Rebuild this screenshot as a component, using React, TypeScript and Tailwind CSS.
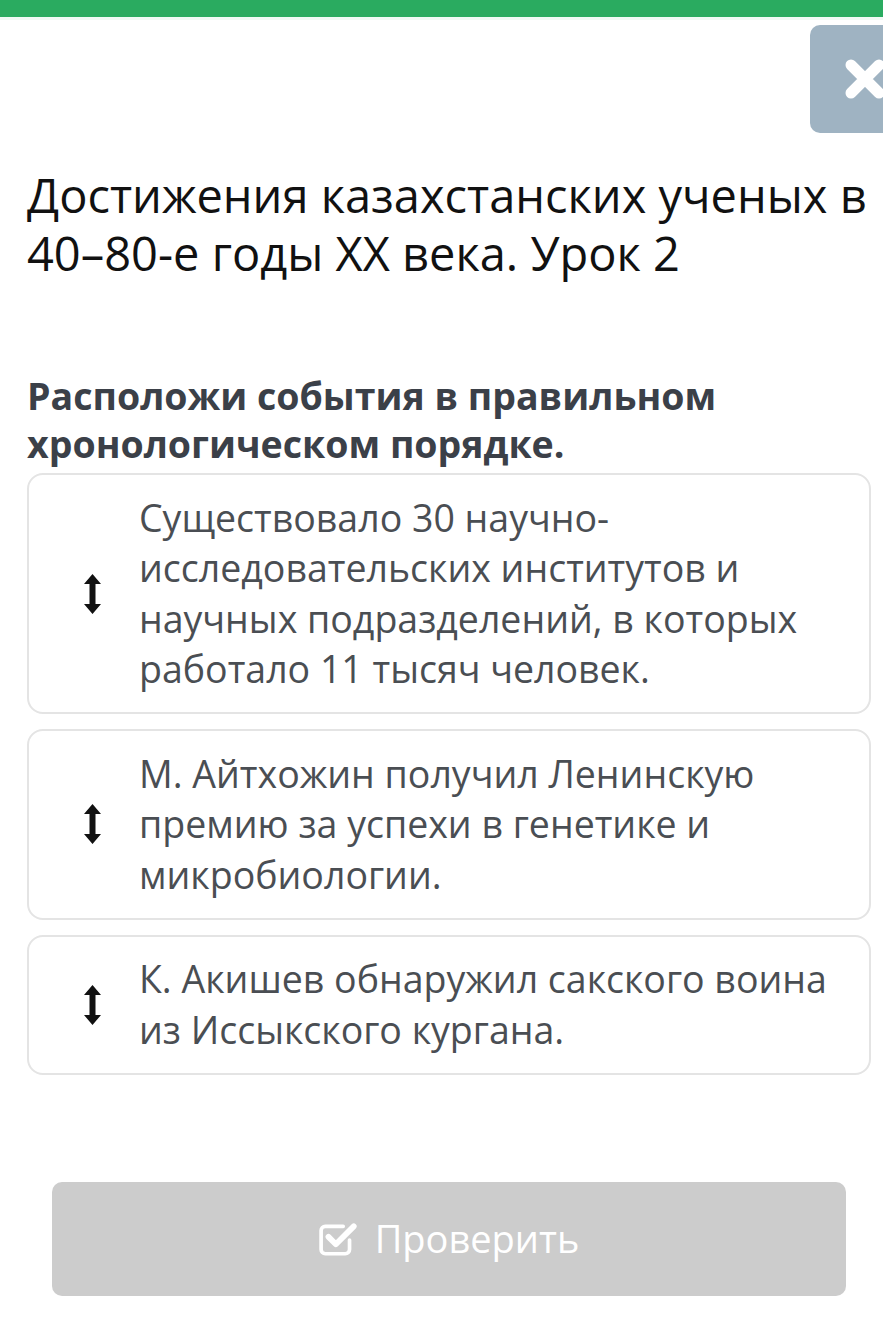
import React from 'react';

const items = [
  'Существовало 30 научно-исследовательских институтов и научных подразделений, в которых работало 11 тысяч человек.',
  'М. Айтхожин получил Ленинскую премию за успехи в генетике и микробиологии.',
  'К. Акишев обнаружил сакского воина из Иссыкского кургана.',
];

function UpDownArrow() {
  return (
    <svg width="17" height="40" viewBox="0 0 17 40" fill="#111">
      <path d="M8.5 0 L17 10 L11.5 10 L11.5 30 L17 30 L8.5 40 L0 30 L5.5 30 L5.5 10 L0 10 Z" />
    </svg>
  );
}

function CheckSquare() {
  return (
    <svg width="40" height="38" viewBox="0 0 38 36" fill="none" stroke="#fff" strokeLinecap="round" strokeLinejoin="round">
      <path d="M29 19 V28 a4 4 0 0 1 -4 4 H6 a4 4 0 0 1 -4 -4 V10 a4 4 0 0 1 4 -4 H23" strokeWidth="3.5" />
      <path d="M9 16 L16 23 L33 6" strokeWidth="5.5" />
    </svg>
  );
}

export default function App() {
  return (
    <div className="min-h-screen w-full overflow-hidden bg-white" style={{ fontFamily: '"Open Sans", "Noto Sans", sans-serif' }}>
      <div className="h-[17px] bg-[#2aab60]" />
      <div className="h-[3px] bg-[#effaf5]" />

      <div className="pl-[27px] pr-[12px]">
        <div className="flex justify-end pt-[5px]">
          <button className="mr-[-49px] flex h-[108px] w-[110px] items-center justify-center rounded-[10px] bg-[#9fb3c2]">
            <svg width="44" height="44" viewBox="0 0 44 44" stroke="#fff" strokeWidth="11" strokeLinecap="round">
              <path d="M8 8 L36 36 M36 8 L8 36" />
            </svg>
          </button>
        </div>

        <h1 className="mt-[34px] mr-[-8px] text-[47px] leading-[57.6px] font-normal text-[#111]">
          Достижения казахстанских ученых в 40–80-е годы XX века. Урок 2
        </h1>

        <p className="mt-[90px] text-[37.5px] leading-[48px] font-bold text-[#3b4048]">
          Расположи события в правильном хронологическом порядке.
        </p>

        <div className="mt-[5px] flex flex-col gap-[15px]">
          {items.map((t, i) => (
            <div key={i} className="flex items-center rounded-[16px] border-2 border-[#e4e4e4] py-[17.5px] pr-[20px]">
              <div className="flex w-[110px] shrink-0 justify-start pl-[55px]">
                <UpDownArrow />
              </div>
              <div className="text-[37.5px] leading-[50.5px] text-[#4a4e53]">{t}</div>
            </div>
          ))}
        </div>

        <div className="mx-[25px] mt-[107px] flex h-[114px] items-center justify-center gap-[16px] rounded-[10px] bg-[#cccccc]">
          <CheckSquare />
          <span className="text-[38px] text-white">Проверить</span>
        </div>
      </div>
    </div>
  );
}
